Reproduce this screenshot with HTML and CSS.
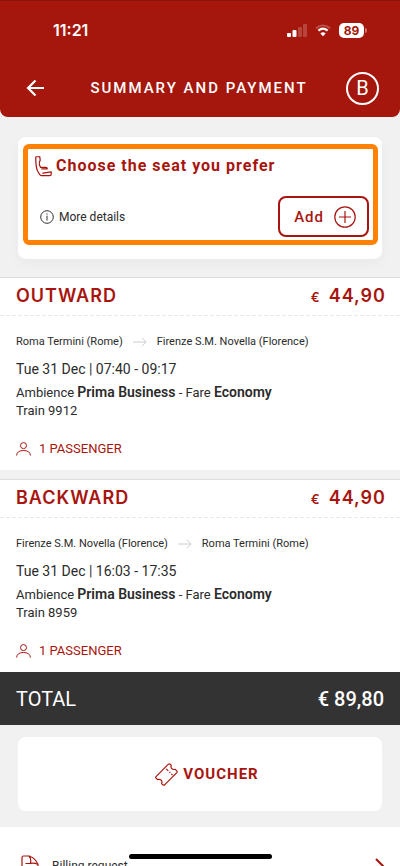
FILE: index.html
```html
<!DOCTYPE html>
<html lang="en">
<head>
<meta charset="utf-8">
<meta name="viewport" content="width=device-width, initial-scale=1">
<title>Summary and payment</title>
<link rel="stylesheet" href="styles.css">
</head>
<body>
<div class="app">
  <header class="top">
    <div class="status">
      <span class="clock">11:21</span>
      <span class="signals">
        <svg width="20" height="13" viewBox="0 0 20 13" fill="#fff"><rect x="0" y="9" width="4" height="4" rx="1"/><rect x="5.500" y="6" width="4" height="7" rx="1"/><rect x="11" y="3" width="4" height="10" rx="1" opacity=".2"/><rect x="16" y="0" width="4" height="13" rx="1" opacity=".2"/></svg>
        <svg width="16" height="13" viewBox="0 0 18 14" fill="none" stroke="#fff" stroke-width="2"><path d="M1 4.500Q9-2.200 17 4.500" opacity=".25"/><path d="M3.800 7.200Q9 2.600 14.200 7.200" stroke-width="2.500"/><path d="M9 13.500 6 10.300Q9 7.800 12 10.300Z" fill="#fff" stroke="none"/></svg>
        <span class="battery">89</span>
      </span>
    </div>
    <div class="bar">
      <button class="back" aria-label="Back"><svg width="20" height="18" viewBox="0 0 20 18" fill="none" stroke="#fff" stroke-width="2.200"><path d="M18 9H2.500M9.500 1.500 2 9l7.500 7.500"/></svg></button>
      <h1>SUMMARY AND PAYMENT</h1>
      <button class="profile" aria-label="Profile B">B</button>
    </div>
  </header>

  <main>
    <section class="seat-area">
      <div class="card seat-card">
        <div class="seat">
          <h2 class="seat-title">
            <svg width="17" height="22" viewBox="0 0 18 22" fill="none" stroke="#a8150e" stroke-width="1.300" stroke-linejoin="round" stroke-linecap="round"><path d="M5 1.200H1.600Q.8 1.200.8 2C.8 8 1.200 13 2.600 16L4.600 19.500Q5.500 21.200 7 21.200H15.500Q17.200 21.200 17.200 19.500V17.300L8.300 18.600"/><path d="M5 1.200 5.500 4.800Q4 7.500 4.700 10L6 12.500H11.500Q13 12.500 13 14H7.200"/></svg>
            Choose the seat you prefer
          </h2>
          <div class="seat-row">
            <a class="details" href="#details"><svg width="14" height="14" viewBox="0 0 14 14" fill="none" stroke="#333"><circle cx="7" cy="7" r="6.300"/><path d="M7 5.700V10.500M7 3.400V4.600"/></svg>More details</a>
            <button class="add">Add<svg width="22" height="22" viewBox="0 0 22 22" fill="none" stroke="#a8150e" stroke-width="1.200"><circle cx="11" cy="11" r="10.200"/><path d="M5 11H17M11 5V17"/></svg></button>
          </div>
        </div>
      </div>
    </section>

    <section class="trip">
      <div class="trip-head"><h2>OUTWARD</h2><span class="price"><small>€</small>44,90</span></div>
      <div class="trip-body">
        <p class="route"><span>Roma Termini (Rome)</span><svg width="14" height="10" viewBox="0 0 14 10" fill="none" stroke="#ccc"><path d="M0 5H13M9 .8 13.200 5 9 9.200"/></svg><span>Firenze S.M. Novella (Florence)</span></p>
        <p class="when">Tue 31 Dec | 07:40 - 09:17</p>
        <p class="fare">Ambience <b>Prima Business</b> - Fare <b>Economy</b><br>Train 9912</p>
        <a class="people" href="#passengers"><svg width="15" height="14" viewBox="0 0 15 14" fill="none" stroke="#a8150e"><circle cx="7.500" cy="3.600" r="3"/><path d="M.6 13.500Q1 8.500 7.500 8.500T14.400 13.500"/></svg>1 PASSENGER</a>
      </div>
    </section>

    <section class="trip">
      <div class="trip-head"><h2>BACKWARD</h2><span class="price"><small>€</small>44,90</span></div>
      <div class="trip-body">
        <p class="route"><span>Firenze S.M. Novella (Florence)</span><svg width="14" height="10" viewBox="0 0 14 10" fill="none" stroke="#ccc"><path d="M0 5H13M9 .8 13.200 5 9 9.200"/></svg><span>Roma Termini (Rome)</span></p>
        <p class="when">Tue 31 Dec | 16:03 - 17:35</p>
        <p class="fare">Ambience <b>Prima Business</b> - Fare <b>Economy</b><br>Train 8959</p>
        <a class="people" href="#passengers"><svg width="15" height="14" viewBox="0 0 15 14" fill="none" stroke="#a8150e"><circle cx="7.500" cy="3.600" r="3"/><path d="M.6 13.500Q1 8.500 7.500 8.500T14.400 13.500"/></svg>1 PASSENGER</a>
      </div>
    </section>

    <div class="total"><span>TOTAL</span><strong>€ 89,80</strong></div>

    <section class="voucher-area">
      <button class="card voucher"><svg width="23" height="23" viewBox="0 0 23 23" fill="none" stroke="#a8150e" stroke-width="1.200" stroke-linejoin="round"><path d="M.8 13.800 13.400 1.200Q14.300.4 15.200 1.200L16.300 2.300Q15.500 4.300 16.800 5.600T20.300 6.300L21.800 7.800Q22.600 8.700 21.800 9.600L9.600 21.800Q8.700 22.600 7.800 21.800L6.600 20.600Q7.500 18.600 6.200 17.200T2.600 16.600L.9 15Q.4 14.400.8 13.800Z"/><path d="M11.200 5.800 17.600 12.200" stroke-dasharray="3 1.500 1.200 1.500"/></svg>VOUCHER</button>
    </section>

    <a class="billing" href="#billing">
      <svg width="18" height="22" viewBox="0 0 18 22" fill="none" stroke="#a8150e" stroke-width="1.200"><path d="M1 21V2.500Q1 1 2.500 1H8Q14 2.500 17 9.500V21ZM8 1Q10.500 4 9.500 8.500Q13 7.500 17 9.500M4.500 8.500H9.500"/></svg>
      <span>Billing request</span>
      <svg width="9" height="16" viewBox="0 0 9 16" fill="none" stroke="#a8150e" stroke-width="2"><path d="M1 1 8 8 1 15"/></svg>
    </a>
  </main>
  <div class="home"></div>
</div>
</body>
</html>
```

FILE: styles.css
```css
* { box-sizing: border-box; }
body { margin: 0; background: #f1f1f1; font-family: Roboto, "Liberation Sans", sans-serif; color: #2b2b2b; }
h1, h2, p { margin: 0; }
button { font: inherit; margin: 0; padding: 0; border: 0; background: none; cursor: pointer; }
a { color: inherit; text-decoration: none; }
svg { display: block; flex: none; }

.app { position: relative; height: 100vh; overflow: hidden; }

.top { background: #a5170c; border-top: 1px solid #8d140b; border-radius: 0 0 8px 8px; color: #fff; padding-bottom: 8px; }
.status { display: flex; align-items: center; justify-content: space-between; height: 58px; padding: 0 33px 0 53px; }
.clock { font: 600 16px Inter, sans-serif; }
.signals { display: flex; align-items: center; gap: 8px; }
.battery { position: relative; width: 25px; height: 15px; margin-right: 3px; border-radius: 5px; background: #fff; color: #a5170c; font: 700 12px/15px Inter, sans-serif; text-align: center; }
.battery::after { content: ""; position: absolute; right: -3px; top: 5px; width: 2px; height: 5px; border-radius: 0 2px 2px 0; background: #c9746d; }
.bar { display: flex; align-items: center; justify-content: space-between; height: 50px; padding: 8px 21px 0 26px; }
.back { width: 26px; }
.bar h1 { font-size: 15px; font-weight: 500; letter-spacing: 2px; }
.profile { width: 33px; height: 33px; border: 2px solid #fff; border-radius: 50%; color: #fff; font-size: 20px; line-height: 29px; }

.card { background: #fff; border-radius: 8px; }
.seat-area { padding: 20px 18px 18px; }
.seat-card { padding: 7px 4px 14px 5px; box-shadow: 0 4px 12px #0000000a; }
.seat { border: 5px solid #ff8205; border-radius: 6px; height: 101px; padding: 6px 4px 3px 7px; display: flex; flex-direction: column; justify-content: space-between; }
.seat-title { display: flex; align-items: center; gap: 4px; font-size: 16px; font-weight: 700; letter-spacing: 1px; line-height: 22px; color: #a8150e; }
.seat-row { display: flex; align-items: center; justify-content: space-between; padding-left: 5px; }
.details { display: flex; align-items: center; gap: 5px; font-size: 12px; }
.add { display: flex; align-items: center; gap: 10px; height: 41px; padding: 0 11px 0 14px; border: 2px solid #a8150e; border-radius: 8px; color: #a8150e; font-size: 15px; font-weight: 500; letter-spacing: 1px; }

.trip { background: #fff; border-top: 1px solid #ddd; margin-bottom: 9px; }
.trip-head { display: flex; align-items: center; justify-content: space-between; height: 38px; padding: 0 14px 4px 16px; background: repeating-linear-gradient(90deg, #e9e9e9 0 4px, #fff 4px 6px) bottom / 100% 1px no-repeat; color: #a8150e; font-family: Inter, sans-serif; font-weight: 600; }
.trip-head h2 { font-size: 18px; font-weight: 600; letter-spacing: 1px; }
.price { display: flex; align-items: baseline; gap: 8px; font-size: 18px; letter-spacing: 1px; }
.price small { font-size: 13px; }
.trip-body { padding: 17px 16px 12px; }
.route { display: flex; align-items: center; gap: 10px; font-size: 11px; line-height: 18px; }
.when { margin-top: 8px; font-size: 14px; line-height: 20px; }
.fare { margin-top: 5px; font-size: 13px; line-height: 18px; }
.fare b { font-size: 14px; font-weight: 600; line-height: 1; }
.people { display: flex; align-items: center; gap: 8px; margin-top: 20px; font-size: 13px; line-height: 18px; color: #a8150e; }

.total { display: flex; align-items: center; justify-content: space-between; height: 53px; margin-top: -9px; padding: 0 16px; background: #333; color: #fff; font-size: 20px; }
.total strong { font-weight: 500; }

.voucher-area { padding: 12px 18px 16px; }
.voucher { display: flex; align-items: center; justify-content: center; gap: 5px; width: 100%; height: 74px; padding-left: 14px; color: #a8150e; font-size: 15px; font-weight: 700; letter-spacing: 1px; }

.billing { display: flex; align-items: center; height: 78px; padding: 0 16px 0 21px; background: #fff; font-size: 12px; }
.billing span { flex: 1; padding-left: 13px; }

.home { position: absolute; left: 50%; bottom: 7px; width: 143px; height: 5px; margin-left: -71px; border-radius: 3px; background: #000; }
```
